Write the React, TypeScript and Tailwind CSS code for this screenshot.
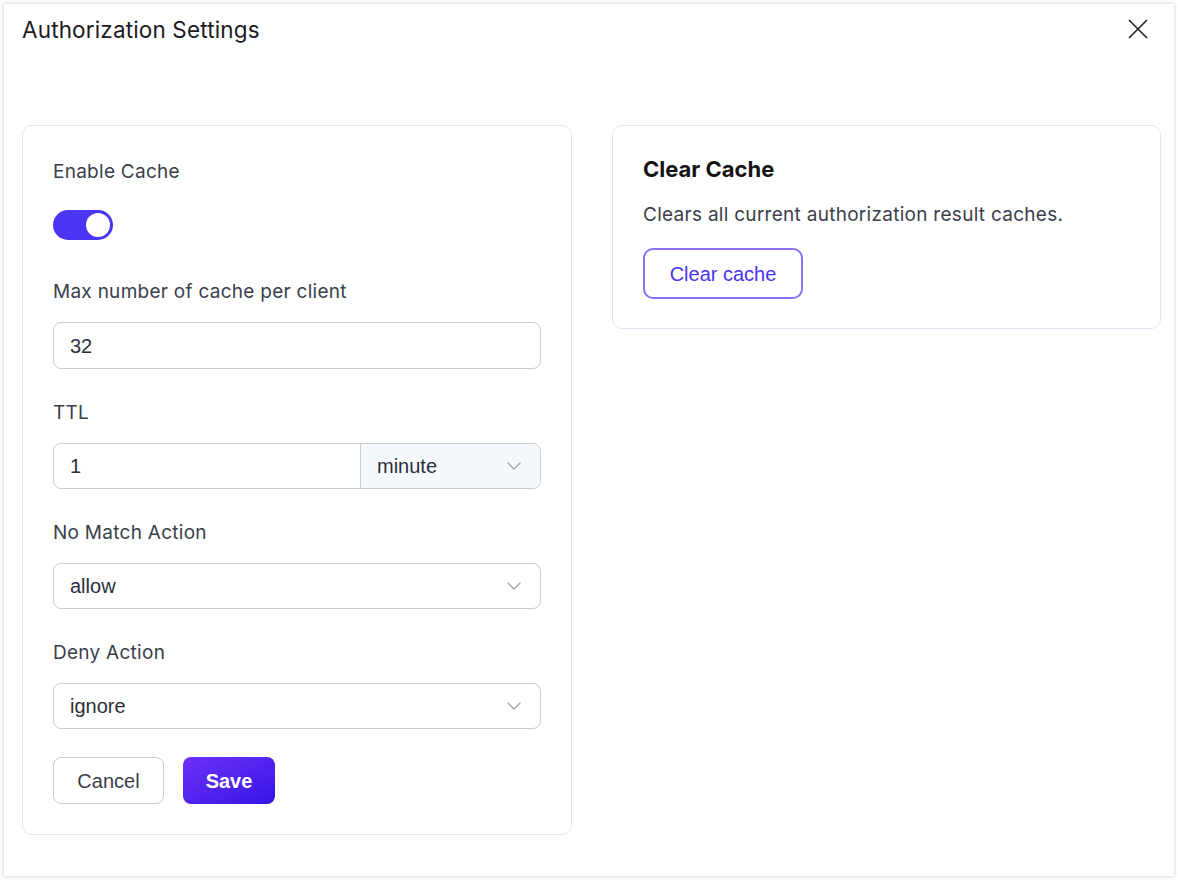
import { useState } from "react";

const labelCls =
  "h-6 leading-6 text-[19px] tracking-[0.27px] text-[#3b3e4b] mb-[18px] font-['Inter',sans-serif]";
const inputFont = "font-['Liberation_Sans',Arial,sans-serif] text-[20px] text-[#2c2f3b]";

function Chevron() {
  return (
    <svg width="16" height="10" viewBox="0 0 16 10" fill="none" className="shrink-0">
      <path d="M1.5 1.5 L8 8 L14.5 1.5" stroke="#a3a7b1" strokeWidth="1.3" />
    </svg>
  );
}

function SelectBox({ value }: { value: string }) {
  return (
    <div className="flex h-[46px] items-center justify-between rounded-lg border border-[#c9cdd6] bg-white pl-4 pr-[18px]">
      <span className={inputFont}>{value}</span>
      <Chevron />
    </div>
  );
}

export default function App() {
  const [enabled, setEnabled] = useState(true);

  return (
    <div className="h-[880px] w-[1178px] bg-white p-1">
      <div className="h-full w-full bg-white shadow-[0_0_4px_rgba(0,0,0,0.22)] pl-[18px] pr-[13px] pt-[10px]">
        <div className="flex items-start justify-between">
          <h1 className="text-[22.5px] leading-8 tracking-[0.15px] text-[#1b1b1f] font-['Inter',sans-serif]">
            Authorization Settings
          </h1>
          <button className="mt-[5px] mr-[13px]">
            <svg width="20" height="20" viewBox="0 0 20 20" fill="none">
              <path d="M1 1 L19 19 M19 1 L1 19" stroke="#222" strokeWidth="1.6" />
            </svg>
          </button>
        </div>

        <div className="mt-[79px] flex items-start gap-[40px]">
          {/* left card */}
          <div className="w-[550px] shrink-0 rounded-[10px] border border-[#e6e4f3] px-[30px] pt-[34px] pb-[30px]">
            <div className="mb-[32px]">
              <div className={labelCls}>Enable Cache</div>
              <div className="flex h-[46px] items-start pt-[8px]">
                <button
                  onClick={() => setEnabled(!enabled)}
                  className={`flex h-[30px] w-[60px] items-center rounded-full px-[3px] ${
                    enabled ? "justify-end bg-[#4b36f6]" : "justify-start bg-[#c9cdd6]"
                  }`}
                >
                  <span className="h-6 w-6 rounded-full bg-white" />
                </button>
              </div>
            </div>

            <div className="mb-[32px]">
              <div className={labelCls}>Max number of cache per client</div>
              <div className="flex h-[47px] items-center rounded-lg border border-[#c9cdd6] px-4">
                <span className={inputFont}>32</span>
              </div>
            </div>

            <div className="mb-[32px]">
              <div className={labelCls}>TTL</div>
              <div className="flex h-[46px] overflow-hidden rounded-lg border border-[#c9cdd6]">
                <div className="flex flex-1 items-center px-4">
                  <span className={inputFont}>1</span>
                </div>
                <div className="flex w-[180px] items-center justify-between border-l border-[#c9cdd6] bg-[#f5f8fd] pl-4 pr-[18px]">
                  <span className={inputFont}>minute</span>
                  <Chevron />
                </div>
              </div>
            </div>

            <div className="mb-[32px]">
              <div className={labelCls}>No Match Action</div>
              <SelectBox value="allow" />
            </div>

            <div className="mb-[28px]">
              <div className={labelCls}>Deny Action</div>
              <SelectBox value="ignore" />
            </div>

            <div className="flex gap-[19px]">
              <button className="h-[47px] w-[111px] rounded-lg border border-[#c9ccd5] bg-white font-['Liberation_Sans',Arial,sans-serif] text-[20px] text-[#3a3d4a]">
                Cancel
              </button>
              <button className="h-[47px] w-[92px] rounded-lg bg-gradient-to-br from-[#6d2ff8] to-[#3511e4] font-['Liberation_Sans',Arial,sans-serif] text-[20px] font-bold text-white">
                Save
              </button>
            </div>
          </div>

          {/* right card */}
          <div className="flex-1 rounded-[10px] border border-[#e6e4f3] px-[30px] pt-[29px] pb-[29px] font-['Inter',sans-serif]">
            <h2 className="h-7 leading-7 text-[22px] font-bold text-[#141414]">Clear Cache</h2>
            <p className="mt-[20px] h-6 leading-6 text-[19px] tracking-[0.28px] text-[#3b3e4b]">
              Clears all current authorization result caches.
            </p>
            <button className="mt-[21px] h-[51px] w-[160px] rounded-[10px] border-2 border-[#8e70f8] bg-white font-['Liberation_Sans',Arial,sans-serif] text-[20px] text-[#4a33f2]">
              Clear cache
            </button>
          </div>
        </div>
      </div>
    </div>
  );
}
